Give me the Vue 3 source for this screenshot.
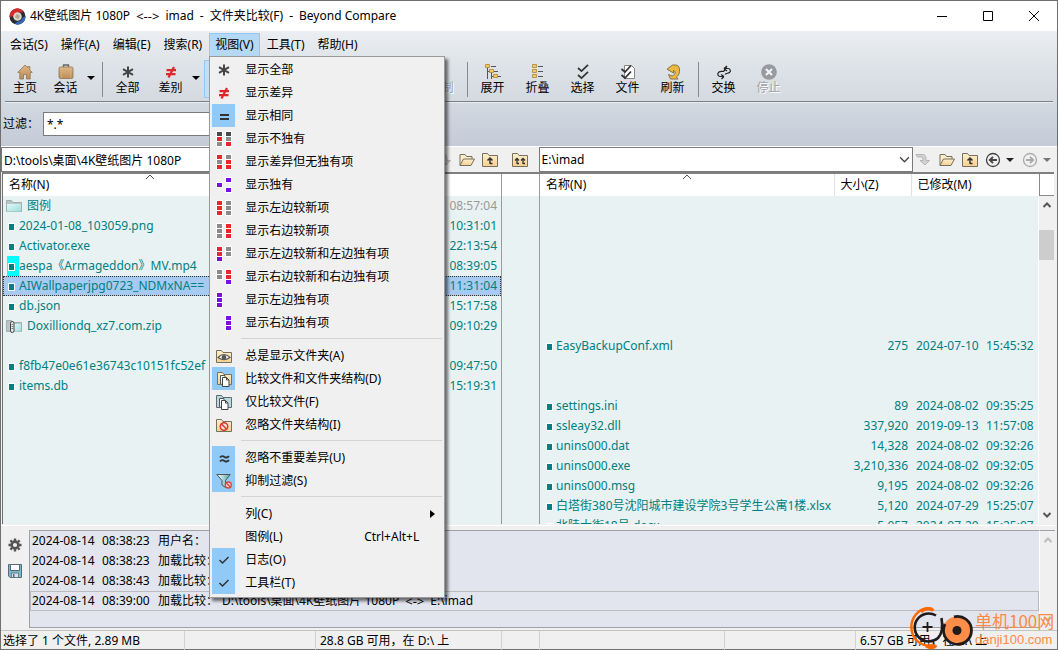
<script setup>
import { ref } from 'vue'

const menus = ['会话(S)', '操作(A)', '编辑(E)', '搜索(R)', '视图(V)', '工具(T)', '帮助(H)']
const openMenu = '视图(V)'

const cellColors = { K: '#4a4a4a', R: '#e8262b', G: '#8b8b8b', P: '#7a10e0' }

function cells(pattern) {
  return pattern
    .split('')
    .map((c, i) => ({ c, x: i % 2 ? 10 : 1, y: 1 + Math.floor(i / 2) * 5 }))
    .filter((cell) => cell.c !== '-')
    .map((cell) => ({ ...cell, fill: cellColors[cell.c] }))
}

const menuGroups = [
  [
    { text: '显示全部', icon: 'star' },
    { text: '显示差异', icon: 'noteq' },
    { text: '显示相同', icon: 'equal', on: true },
    { text: '显示不独有', cells: 'KKRGGR' },
    { text: '显示差异但无独有项', cells: 'RGGRRR' },
    { text: '显示独有', cells: '-PP--P' },
    { text: '显示左边较新项', cells: 'RGRGRG' },
    { text: '显示右边较新项', cells: 'GRGRGR' },
    { text: '显示左边较新和左边独有项', cells: 'RGRGP-' },
    { text: '显示右边较新和右边独有项', cells: 'GRGR-P' },
    { text: '显示左边独有项', cells: 'P-P-P-' },
    { text: '显示右边独有项', cells: '-P-P-P' },
  ],
  [
    { text: '总是显示文件夹(A)', icon: 'eye' },
    { text: '比较文件和文件夹结构(D)', icon: 'struct', on: true },
    { text: '仅比较文件(F)', icon: 'files' },
    { text: '忽略文件夹结构(I)', icon: 'nofolder' },
  ],
  [
    { text: '忽略不重要差异(U)', icon: 'approx', on: true },
    { text: '抑制过滤(S)', icon: 'funnel', on: true },
  ],
  [
    { text: '列(C)', sub: true },
    { text: '图例(L)', key: 'Ctrl+Alt+L' },
    { text: '日志(O)', icon: 'check', on: true },
    { text: '工具栏(T)', icon: 'check', on: true },
  ],
]

const leftRows = [
  { name: '图例', time: '08:57:04', icon: 'folderteal', dim: true },
  { name: '2024-01-08_103059.png', time: '10:31:01' },
  { name: 'Activator.exe', time: '22:13:54' },
  { name: 'aespa《Armageddon》MV.mp4', time: '08:39:05', mark: true },
  { name: 'AIWallpaperjpg0723_NDMxNA==', time: '11:31:04', selected: true },
  { name: 'db.json', time: '15:17:58' },
  { name: 'Doxilliondq_xz7.com.zip', time: '09:10:29', icon: 'zip' },
  {},
  { name: 'f8fb47e0e61e36743c10151fc52ef', time: '09:47:50' },
  { name: 'items.db', time: '15:19:31' },
]

const blank = (n) => Array.from({ length: n }, () => ({}))
const rightRows = [
  ...blank(7),
  { name: 'EasyBackupConf.xml', size: '275', day: '2024-07-10', time: '15:45:32' },
  ...blank(2),
  { name: 'settings.ini', size: '89', day: '2024-08-02', time: '09:35:25' },
  { name: 'ssleay32.dll', size: '337,920', day: '2019-09-13', time: '11:57:08' },
  { name: 'unins000.dat', size: '14,328', day: '2024-08-02', time: '09:32:26' },
  { name: 'unins000.exe', size: '3,210,336', day: '2024-08-02', time: '09:32:05' },
  { name: 'unins000.msg', size: '9,195', day: '2024-08-02', time: '09:32:26' },
  { name: '白塔街380号沈阳城市建设学院3号学生公寓1楼.xlsx', size: '5,120', day: '2024-07-29', time: '15:25:07' },
  { name: '北陵大街18号.docx', size: '5,057', day: '2024-07-29', time: '15:25:07' },
]

const logs = [
  { day: '2024-08-14', time: '08:38:23', text: '用户名：' },
  { day: '2024-08-14', time: '08:38:23', text: '加载比较：' },
  { day: '2024-08-14', time: '08:38:43', text: '加载比较：' },
  { day: '2024-08-14', time: '08:39:00', text: '加载比较：', from: 'D:\\tools\\桌面\\4K壁纸图片 1080P', to: 'E:\\imad' },
]

const status = ['选择了 1 个文件, 2.89 MB', '', '28.8 GB 可用，在 D:\\ 上', '', '', '', '6.57 GB 可用，在 E:\\ 上']

const filter = ref('*.*')
const leftPath = ref('D:\\tools\\桌面\\4K壁纸图片 1080P')
const rightPath = ref('E:\\imad')
</script>

<template>
  <svg class="defs" aria-hidden="true">
    <defs>
      <linearGradient id="gTan" x1="0" y1="0" x2="0" y2="1"><stop offset="0" stop-color="#dfb988" /><stop offset="1" stop-color="#bd8c55" /></linearGradient>
      <linearGradient id="gFold" x1="0" y1="0" x2="0" y2="1"><stop offset="0" stop-color="#fdf0cf" /><stop offset="1" stop-color="#f6cf8c" /></linearGradient>
      <linearGradient id="gTeal" x1="0" y1="0" x2="1" y2="1"><stop offset="0" stop-color="#dff8f7" /><stop offset="1" stop-color="#9fdcdd" /></linearGradient>
      <linearGradient id="gFun" x1="0" y1="0" x2="1" y2="0"><stop offset="0" stop-color="#fff" /><stop offset="1" stop-color="#4fa6a6" /></linearGradient>
    </defs>
    <symbol id="star" viewBox="0 0 16 16"><path d="M8 2.5v11M3 5.2l10 5.6M13 5.2L3 10.8" stroke="#444" stroke-width="2" fill="none" /></symbol>
    <symbol id="noteq" viewBox="0 0 16 16"><path d="M3.5 6.2h9.5M3 10.2h9.5M11 3L5.5 13.5" stroke="#e0252b" stroke-width="2.2" fill="none" /></symbol>
    <symbol id="equal" viewBox="0 0 16 16"><path d="M4 7h9M4 11h9" stroke="#333" stroke-width="2" /></symbol>
    <symbol id="approx" viewBox="0 0 16 16"><path d="M4 7.5c1.5-2 3-1.6 4.5-.6s3 1 4.5-.8M4 11.5c1.5-2 3-1.6 4.5-.6s3 1 4.5-.8" stroke="#333" stroke-width="1.8" fill="none" /></symbol>
    <symbol id="check" viewBox="0 0 16 16"><path d="M3.5 8l3 3 6-6" stroke="#333" stroke-width="1.5" fill="none" /></symbol>
    <symbol id="home" viewBox="0 0 16 16"><path d="M8 1L.8 8.4h2V15h3.7v-4.5h3V15h3.7V8.400h2L12.800 5.900V2.500h-2V4z" fill="url(#gTan)" stroke="#8f7350" stroke-width=".8" /></symbol>
    <symbol id="case" viewBox="0 0 16 16"><path d="M5.500 3V1h5v2" stroke="#666" stroke-width="1.300" fill="none" /><rect x="1" y="3" width="14" height="11.500" rx="1.500" fill="url(#gTan)" stroke="#8f7350" stroke-width=".8" /><path d="M3.500 3v11M12.500 3v11" stroke="#d9b27e" stroke-width=".6" /></symbol>
    <symbol id="expand" viewBox="0 0 16 16"><path d="M2.500 4v11M6.500 7v8M6 2.500h5M9 7.500h4M12 12.500h4M2.500 7.500h3M6.500 12.500h3" stroke="#555" fill="none" /><path d="M.5.500h4v3h-4zM4.500 5.500h4v3h-4zM8.500 10.500h4v3h-4z" fill="#f4c860" stroke="#b08432" stroke-width=".8" /></symbol>
    <symbol id="collapse" viewBox="0 0 16 16"><path d="M8 2.500h5M8 7.500h5M8 12.500h5" stroke="#555" fill="none" /><path d="M2.500.500h4v3h-4zM2.500 5.500h4v3h-4zM2.500 10.500h4v3h-4z" fill="#f4c860" stroke="#b08432" stroke-width=".8" /></symbol>
    <symbol id="select" viewBox="0 0 16 16"><path d="M3 4l3.500 3.200L13 .8M3 11l3.500 3.200L13 7.800" stroke="#333" stroke-width="1.700" fill="none" /></symbol>
    <symbol id="filesel" viewBox="0 0 16 16"><path d="M4.500 1.500h7l3 3v10h-10z" fill="#fff" stroke="#888" /><path d="M1.500 5L5 8l6-6.500M1.500 11L5 14l6-6.500" stroke="#333" stroke-width="1.700" fill="none" /></symbol>
    <symbol id="refresh" viewBox="0 0 16 16"><path d="M7.500 1H11c3 .5 3.800 3 3.500 6.500-.3 3-1.500 4.500-3 5.300L13 15H5.500l-2-4.500L7 12c2.500-.8 3.500-2.500 3-4.500L8.500 6.500V9L2 5.200 7.500 1z" fill="#edb83f" stroke="#7c6a45" stroke-width=".9" /></symbol>
    <symbol id="swap" viewBox="0 0 16 16"><path d="M8 12.500L5.500 15M8 12.500L5 10.500M8 12.500H4C1.500 12 1 9.500 3 8s4 0 5-1 1-3 3-4.500M8 4.500h4c2.500 0 3 3 1.500 4s-3.500.5-4.500 2M8 4.500l3-2.500M8 4.500l3 2.500" stroke="#222" stroke-width="1.200" fill="none" /></symbol>
    <symbol id="stop" viewBox="0 0 16 16"><circle cx="8" cy="8" r="7.800" fill="#989a9e" /><path d="M5 5l6 6M11 5l-6 6" stroke="#f0f1f3" stroke-width="2.200" /></symbol>
    <symbol id="copy" viewBox="0 0 16 16"><path d="M1 6h5V3l5 5-5 5v-3H1z" fill="#999" /></symbol>
    <symbol id="open" viewBox="0 0 16 16"><path d="M1 13.500v-11h5l1.500 2h5.500v2.500" fill="#fdecc6" stroke="#77705f" /><path d="M1 13.500L4.500 7h11L12 13.500z" fill="url(#gFold)" stroke="#77705f" /></symbol>
    <symbol id="up" viewBox="0 0 16 16"><path d="M.5 14.500v-13h5l1.500 2h8.500v11z" fill="url(#gFold)" stroke="#77705f" /><path d="M8 12V7M5.500 8.500L8 6l2.500 2.500M8 11.500h2.500" stroke="#333" stroke-width="1.500" fill="none" /></symbol>
    <symbol id="up2" viewBox="0 0 16 16"><path d="M.5 14.500v-13h5l1.500 2h8.500v11z" fill="url(#gFold)" stroke="#77705f" /><path d="M5 12V7M3 8.500L5 6.500l2 2M5 11.500h2M11 12V7M9 8.500l2-2 2 2M11 11.500h2" stroke="#333" stroke-width="1.300" fill="none" /></symbol>
    <symbol id="browse" viewBox="0 0 16 16"><path d="M1 2.500h6.500c3 0 3.500 2 3.500 6h3.500L10 13 5 8.500h3c0-3-.5-3.500-2.500-3.500H2.500z" fill="#d2d2d2" stroke="#aaa" stroke-width=".8" /></symbol>
    <symbol id="back" viewBox="0 0 16 16"><circle cx="8" cy="8" r="6.500" fill="none" stroke="currentColor" stroke-width="1.300" /><path d="M12 8H5M8 4.800L4.800 8 8 11.200" fill="none" stroke="currentColor" stroke-width="1.900" /></symbol>
    <symbol id="fwd" viewBox="0 0 16 16"><circle cx="8" cy="8" r="6.500" fill="none" stroke="currentColor" stroke-width="1.300" /><path d="M4 8h7M8 4.800l3.200 3.200L8 11.200" fill="none" stroke="currentColor" stroke-width="1.900" /></symbol>
    <symbol id="eye" viewBox="0 0 16 16"><path d="M.5 14.500v-12h5l1.500 2h8.500v10z" fill="url(#gFold)" stroke="#77705f" /><path d="M2 9.500Q8 3.500 14 9.500 8 14 2 9.500z" fill="#fff" stroke="#555" stroke-width="1.100" /><circle cx="8" cy="9.300" r="2.300" fill="#555" /></symbol>
    <symbol id="struct" viewBox="0 0 16 16"><path d="M1.500 13.500v-12h5l1.500 2h7.500v10z" fill="url(#gFold)" stroke="#77705f" /><path d="M4.500 13V4.500h4.500v2" fill="#fff" stroke="#555" /><path d="M6.500 6.500h4l2.500 2.500v6.500H6.500z" fill="#fff" stroke="#444" /><path d="M10.500 6.500V9H13" fill="none" stroke="#444" /></symbol>
    <symbol id="files" viewBox="0 0 16 16"><path d="M.5 13.500v-12h5l1.500 2h8.500v10z" fill="#b4dedc" stroke="#667" /><path d="M3.500 13V4.500H8v1.500" fill="#fff" stroke="#555" /><path d="M5.500 6.500h4l2.500 2.500v6.500H5.500z" fill="#fff" stroke="#444" /><path d="M9.500 6.500V9H12" fill="none" stroke="#444" /></symbol>
    <symbol id="nofolder" viewBox="0 0 16 16"><path d="M.5 14.500v-12h5l1.500 2h8.500v10z" fill="url(#gFold)" stroke="#77705f" /><circle cx="8" cy="9.500" r="3.700" fill="#fbe3dc" stroke="#d8372c" stroke-width="1.500" /><path d="M5.500 7l5 5" stroke="#d8372c" stroke-width="1.500" /></symbol>
    <symbol id="funnel" viewBox="0 0 16 16"><path d="M.8 1.500h13.400L9.500 7.500v7l-3.500-2.500V7.500z" fill="url(#gFun)" stroke="#555" /><circle cx="12.300" cy="12" r="3" fill="#f6d9d6" stroke="#d4473f" stroke-width="1.300" /><path d="M10.300 10l4 4" stroke="#d4473f" stroke-width="1.300" /></symbol>
    <symbol id="folderteal" viewBox="0 0 16 16"><path d="M.5 13.500v-11h5l1.500 2h8.500v9z" fill="#b9c5c6" stroke="#a2adae" /><path d="M1 6h14v7.500H1z" fill="url(#gTeal)" /></symbol>
    <symbol id="zip" viewBox="0 0 16 16"><path d="M.5 13.500v-11h5l1.500 2h8.500v9z" fill="#b9c5c6" stroke="#a2adae" /><path d="M8 6h7v7.500H8z" fill="url(#gTeal)" /><rect x="4.500" y="3.500" width="3.500" height="11" rx="1.700" fill="#e8e8e8" stroke="#444" /><path d="M6.200 6v6" stroke="#444" stroke-dasharray="1 1" /></symbol>
    <symbol id="gear" viewBox="0 0 16 16"><circle cx="8" cy="8" r="3.400" fill="none" stroke="#555" stroke-width="2.600" /><path d="M8 1.500v2.500M8 12v2.500M1.500 8h2.500M12 8h2.500M3.400 3.400L5 5M11 11l1.600 1.600M12.600 3.400L11 5M5 11l-1.600 1.600" stroke="#555" stroke-width="2.400" /></symbol>
    <symbol id="save" viewBox="0 0 16 16"><path d="M1.500 1.500h13v13H3l-1.500-1.500z" fill="#76b9d0" stroke="#596b75" /><path d="M3.500 1.500h9v6h-9z" fill="#fff" stroke="#596b75" /><path d="M4.500 10h7v4.500h-7z" fill="#dde4e8" stroke="#596b75" stroke-width=".8" /><path d="M6 11h1.500v3H6z" fill="#596b75" /></symbol>
    <symbol id="down" viewBox="0 0 8 8"><path d="M0 2h8L4 6z" fill="currentColor" /></symbol>
    <symbol id="chevup" viewBox="0 0 10 10"><path d="M1.500 7L5 3.500 8.500 7" fill="none" stroke="currentColor" stroke-width="2" /></symbol>
    <symbol id="chevdown" viewBox="0 0 10 10"><path d="M1.500 3L5 6.500 8.500 3" fill="none" stroke="currentColor" stroke-width="2" /></symbol>
    <symbol id="thinup" viewBox="0 0 10 10"><path d="M1 7l4-4 4 4" fill="none" stroke="#555" /></symbol>
    <symbol id="thindown" viewBox="0 0 10 10"><path d="M1 3l4 4 4-4" fill="none" stroke="#444" stroke-width="1.200" /></symbol>
  </svg>

  <div class="window">
    <header class="title">
      <svg class="logo" viewBox="0 0 16 16">
        <circle cx="8" cy="8" r="7.500" fill="#2b2b2e" />
        <path d="M.5 8.500C.2 3.500 4 .2 8.500.3l3.500 1.500 1 2.700-3-.5-3 1L3.500 8z" fill="#d92a2a" />
        <path d="M15.500 7.500c.3 5-3.500 8.300-8 8.200l-2-1.200L8 13l3-1 2-3z" fill="#3767b5" />
        <circle cx="8" cy="8" r="4" fill="#d8d6d0" /><path d="M5.500 8.500l2-3 3 2-2 3z" fill="#b5a68d" />
      </svg>
      <h1>
        <span>4K壁纸图片 1080P</span><span class="arrows">&lt;--&gt;</span><span>imad</span><span>-</span><span>文件夹比较(F)</span><span>-</span><span>Beyond Compare</span>
      </h1>
      <button aria-label="最小化"><svg viewBox="0 0 10 10"><path d="M0 5.500h10" /></svg></button>
      <button aria-label="最大化"><svg viewBox="0 0 10 10"><path d="M.5.500h9v9h-9z" /></svg></button>
      <button aria-label="关闭"><svg viewBox="0 0 10 10"><path d="M0 0l10 10M10 0L0 10" /></svg></button>
    </header>

    <div class="chrome">
      <nav class="menubar">
        <div v-for="m in menus" :key="m" class="menuslot">
          <button class="menubtn" :class="{ open: m === openMenu }">{{ m }}</button>
          <div v-if="m === openMenu" class="dropdown">
            <div v-for="(g, gi) in menuGroups" :key="gi" class="group">
              <button v-for="it in g" :key="it.text" class="item">
                <span class="ico" :class="{ on: it.on }">
                  <svg v-if="it.cells" class="i16" viewBox="0 0 16 16">
                    <rect v-for="(c, ci) in cells(it.cells)" :key="'w' + ci" :x="c.x - 1" :y="c.y - 1" width="7" height="6" fill="#fff" />
                    <rect v-for="(c, ci) in cells(it.cells)" :key="ci" :x="c.x" :y="c.y" width="5" height="4" :fill="c.fill" />
                  </svg>
                  <svg v-else-if="it.icon" class="i16"><use :href="'#' + it.icon" /></svg>
                </span>
                <span class="label">{{ it.text }}</span>
                <span v-if="it.key" class="key">{{ it.key }}</span>
                <svg v-if="it.sub" class="sub" viewBox="0 0 5 8"><path d="M0 0l5 4-5 4z" /></svg>
              </button>
            </div>
          </div>
        </div>
      </nav>

      <div class="toolbar">
        <button class="tool home"><svg><use href="#home" /></svg>主页</button>
        <button class="tool split"><svg><use href="#case" /></svg>会话</button>
        <button class="arrow" aria-label="会话选项"><svg><use href="#down" /></svg></button>
        <i class="sep"></i>
        <button class="tool"><svg><use href="#star" /></svg>全部</button>
        <button class="tool split"><svg><use href="#noteq" /></svg>差别</button>
        <button class="arrow" aria-label="差别选项"><svg><use href="#down" /></svg></button>
        <button class="tool pressed"><svg><use href="#equal" /></svg>相同</button>
        <span class="covered"></span>
        <button class="tool" disabled><svg><use href="#copy" /></svg>复制</button>
        <i class="sep"></i>
        <button class="tool"><svg><use href="#expand" /></svg>展开</button>
        <button class="tool"><svg><use href="#collapse" /></svg>折叠</button>
        <button class="tool"><svg><use href="#select" /></svg>选择</button>
        <button class="tool"><svg><use href="#filesel" /></svg>文件</button>
        <button class="tool"><svg><use href="#refresh" /></svg>刷新</button>
        <i class="sep"></i>
        <button class="tool"><svg><use href="#swap" /></svg>交换</button>
        <button class="tool" disabled><svg><use href="#stop" /></svg>停止</button>
      </div>

      <div class="filter">
        <label for="filter">过滤：</label>
        <input id="filter" v-model="filter" type="text" />
      </div>
    </div>

    <div class="paths">
      <div class="pathside left">
        <input v-model="leftPath" class="combo" type="text" aria-label="左侧路径" />
        <button class="pi" aria-label="浏览" disabled><svg><use href="#browse" /></svg></button>
        <button class="pi" aria-label="打开文件夹"><svg><use href="#open" /></svg></button>
        <button class="pi" aria-label="上一级"><svg><use href="#up" /></svg></button>
      </div>
      <div class="pathmid"><button class="pi" aria-label="双侧上一级"><svg><use href="#up2" /></svg></button></div>
      <div class="pathside right">
        <div class="selectwrap">
          <select v-model="rightPath" class="combo" aria-label="右侧路径"><option>E:\imad</option></select>
          <svg class="chev"><use href="#thindown" /></svg>
        </div>
        <button class="pi first" aria-label="浏览" disabled><svg><use href="#browse" /></svg></button>
        <button class="pi" aria-label="打开文件夹"><svg><use href="#open" /></svg></button>
        <button class="pi" aria-label="上一级"><svg><use href="#up" /></svg></button>
        <button class="pi hist" aria-label="后退"><svg><use href="#back" /></svg></button>
        <button class="pa" aria-label="后退历史"><svg><use href="#down" /></svg></button>
        <button class="pi hist" aria-label="前进" disabled><svg><use href="#fwd" /></svg></button>
        <button class="pa" aria-label="前进历史" disabled><svg><use href="#down" /></svg></button>
      </div>
    </div>

    <main class="compare">
      <div class="pane left">
        <table>
          <thead>
            <tr><th>名称(N)<svg class="sort"><use href="#thinup" /></svg></th><th class="date"></th></tr>
          </thead>
          <tbody>
            <tr v-for="(r, i) in leftRows" :key="i" :class="{ selected: r.selected }">
              <td :class="{ mark: r.mark }">
                <template v-if="r.name">
                  <svg v-if="r.icon" class="ficon"><use :href="'#' + r.icon" /></svg>
                  <i v-else class="dot"></i>{{ r.name }}
                </template>
              </td>
              <td class="date" :class="{ dim: r.dim }">{{ r.time }}</td>
            </tr>
          </tbody>
        </table>
      </div>
      <div class="gutter"></div>
      <div class="pane">
        <table>
          <thead>
            <tr><th>名称(N)<svg class="sort"><use href="#thinup" /></svg></th><th class="size">大小(Z)</th><th class="date">已修改(M)</th></tr>
          </thead>
          <tbody>
            <tr v-for="(r, i) in rightRows" :key="i">
              <td><template v-if="r.name"><i class="dot"></i>{{ r.name }}</template></td>
              <td class="size">{{ r.size }}</td>
              <td class="date"><span class="day">{{ r.day }}</span>{{ r.time }}</td>
            </tr>
          </tbody>
        </table>
      </div>
      <div class="scroll main">
        <div class="corner"></div>
        <svg><use href="#chevup" /></svg>
        <div class="thumb"></div>
        <svg class="end"><use href="#chevdown" /></svg>
      </div>
    </main>

    <section class="log">
      <div class="logtools">
        <button aria-label="设置"><svg><use href="#gear" /></svg></button>
        <button aria-label="保存"><svg><use href="#save" /></svg></button>
      </div>
      <div class="logbody">
        <p v-for="(l, i) in logs" :key="i" :class="{ current: i === logs.length - 1 }">
          <span class="day">{{ l.day }}</span><span class="at">{{ l.time }}</span><span class="what">{{ l.text }}</span>
          <span v-if="l.from" class="route"><span>{{ l.from }}</span><span class="arrows">&lt;-&gt;</span><span>{{ l.to }}</span></span>
        </p>
      </div>
      <div class="scroll off">
        <svg><use href="#chevup" /></svg>
        <svg class="end"><use href="#chevdown" /></svg>
      </div>
    </section>

    <footer class="status"><span v-for="(s, i) in status" :key="i">{{ s }}</span></footer>

    <div class="watermark">
      <svg viewBox="0 0 64 42">
        <path d="M22 2.500C10-1 0 12 3 25c2 9 12 16 21 13" fill="none" stroke="#ff6a00" stroke-width="2.500" />
        <path d="M12 5c4-5 11-4 12-1M17 39c4 2 8 2 10-1" fill="none" stroke="#ff6a00" stroke-width="3.500" />
        <path d="M27 8.500A14 14 0 1 0 29 31c4-4 5-11 3.500-20" fill="none" stroke="#201a1a" stroke-width="2.600" />
        <path d="M18.500 15v10M13.500 20h10" stroke="#201a1a" stroke-width="1.800" />
        <circle cx="48" cy="23.500" r="14" fill="#ff8d4a" />
        <path d="M45 9.800A14 14 0 1 1 36 17" fill="none" stroke="#201a1a" stroke-width="2.800" />
        <circle cx="48" cy="23.500" r="4.500" fill="#201a1a" />
      </svg>
      <div class="wmtext"><b>单机100网</b><span>danji100.com</span></div>
    </div>
  </div>
</template>

<style>
body { background: #f0f0f0; }
html, body, #app { height: 100%; overflow: hidden; }
</style>

<style scoped>
.defs { position: absolute; width: 0; height: 0; }
.window {
  position: relative; box-sizing: border-box; height: 100vh; display: flex; flex-direction: column;
  border: 1px solid #6f6f6f; background: #f0f0f0; color: #000;
  font: 12px/20px "Noto Sans", "Noto Sans CJK SC", sans-serif;
}
button, input, select { font: inherit; color: inherit; margin: 0; padding: 0; border: 0; background: none; border-radius: 0; outline: 0; }
svg { display: block; flex: none; }
p, h1 { margin: 0; font: inherit; }

.title { display: flex; align-items: center; height: 30px; flex: none; background: #fff; padding-left: 8px; }
.logo { width: 17px; height: 17px; }
.title h1 { flex: 1; display: flex; gap: 6px; margin-left: 4px; white-space: nowrap; }
.arrows { font-size: 13px; }
.title button { width: 46px; height: 30px; display: grid; place-items: center; }
.title button svg { width: 10px; height: 10px; fill: none; stroke: #000; }

.chrome { flex: none; background: linear-gradient(#ebeef3, #e0e5e9 24%, #d2d8e0 65%, #c4cad7); height: 115px; }
.menubar { display: flex; gap: 1px; padding: 2px 0 0 3px; height: 27px; box-sizing: border-box; }
.menuslot { position: relative; }
.menubtn { height: 24px; padding: 0 6px; white-space: nowrap; }
.menubtn.open { background: #b5d8f5; box-shadow: inset 0 0 0 1px #90c8f6; }

.dropdown {
  position: absolute; z-index: 5; top: 23px; left: 0; width: 232px; padding: 1px 1px 3px;
  background: #f0f0f0; border: 1px solid #9a9a9a; box-shadow: 3px 3px 3px rgba(0, 0, 0, .55);
}
.group + .group::before { content: ""; display: block; height: 1px; margin: 4px 1px 5px 30px; background: #d4d4d4; }
.item { display: flex; align-items: center; width: 100%; height: 23px; text-align: left; }
.ico { width: 23px; height: 23px; margin-left: 1px; display: grid; place-items: center; }
.ico.on { background: #91c9f7; }
.i16 { width: 16px; height: 16px; }
.label { margin-left: 10px; flex: 1; white-space: nowrap; }
.key { margin-right: 24px; }
.sub { width: 5px; height: 8px; margin-right: 8px; }

.toolbar { display: flex; height: 43px; margin: 0 4px; border-bottom: 1px solid #7b8086; box-shadow: 0 1px #e8ecf0; }
.tool { width: 45px; height: 38px; margin-top: 2px; padding-top: 4px; display: flex; flex-direction: column; align-items: center; line-height: 16px; flex: none; }
.tool svg { width: 16px; height: 16px; }
.tool.home { width: 40px; }
.tool.split { width: 41px; }
.tool:disabled { color: #9fa3a8; text-shadow: 1px 1px #fff; }
.tool.pressed { margin-left: 4px; background: #c4def5; box-shadow: inset 0 0 0 1px #90c8f6; }
.arrow { width: 9px; display: grid; place-items: center; padding-bottom: 4px; }
.arrow svg { width: 8px; height: 8px; }
.sep { width: 1px; height: 35px; margin: 4px 2px 0 3px; background: #858a90; flex: none; }
.arrow + .sep { margin-left: 7px; margin-right: 2px; }
.covered { width: 170px; flex: none; }

.filter { display: flex; align-items: center; height: 44px; padding-left: 2px; }
.filter label { width: 40px; white-space: nowrap; }
.filter input { width: 300px; height: 24px; box-sizing: border-box; border: 1px solid #7a7a7a; background: #fff; padding: 0 3px; }

.paths { display: flex; height: 25px; flex: none; border-top: 1px solid #fff; }
.pathside { flex: 1 1 0; display: flex; align-items: center; min-width: 0; }
.pathside.right { flex-basis: 18px; }
.pathmid { width: 37px; display: flex; align-items: center; justify-content: center; }
.combo { flex: 1; min-width: 0; height: 25px; box-sizing: border-box; border: 1px solid #7a7a7a; background: #fff; padding: 0 2px; }
.pi { width: 16px; color: #444; flex: none; }
.pi svg { width: 16px; height: 16px; }
.left .pi { margin: 0 4px 0 3px; }
.right .pi { margin-right: 7px; }
.right .pi.first { margin: 0 8px 0 2px; }
.right .pi.hist { margin-right: 5px; }
.pi:disabled { color: #aaa; }
.pa { width: 8px; margin-right: 8px; color: #222; flex: none; }
.pa:last-child { margin-right: 6px; }
.pa:disabled { color: #777; }
.pa svg { width: 8px; height: 8px; }
.selectwrap { flex: 1; position: relative; display: flex; min-width: 0; }
.selectwrap select { appearance: none; width: 100%; }
.chev { position: absolute; right: 3px; top: 7px; width: 11px; height: 11px; pointer-events: none; }

.compare { flex: 1; min-height: 0; display: flex; margin: 0 3px 0 1px; border-top: 2px solid #7f7f7f; border-left: 1px solid #6f6f6f; overflow: hidden; background: #e9f2f3; }
.pane { flex: 1; min-width: 0; overflow: hidden; }
.gutter { width: 39px; flex: none; box-sizing: border-box; border: solid #9b9b9b; border-width: 0 1px; background: linear-gradient(#fff 22px, #e9f2f3 22px); }
table { border-collapse: collapse; table-layout: fixed; width: 100%; color: #008080; }
th { position: relative; height: 22px; padding: 0 6px; background: #fff; color: #000; text-align: left; font-weight: normal; line-height: 20px; border-right: 1px solid #e2e2e2; box-sizing: border-box; }
th:last-child { border-right: 0; }
.sort { position: absolute; left: 50%; top: -2px; width: 10px; height: 10px; margin-left: -5px; }
.left .sort { margin-left: -49px; }
td { height: 20px; padding: 0 0 0 6px; line-height: 20px; white-space: nowrap; overflow: hidden; box-sizing: border-box; }
.size { width: 77px; }
td.size { text-align: right; padding: 0 3px 0 0; }
.date { width: 127px; }
td.date { padding: 0 0 0 5px; }
.day { display: inline-block; width: 70px; }
.left .date { width: 115px; }
.left td.date { text-align: right; padding-right: 4px; }
.left td { padding-left: 3px; }
.dim { color: #999; }
.selected { background: #a6caf0; outline: 1px dotted #333; outline-offset: -1px; }
.mark { background: linear-gradient(90deg, transparent 4px, #0ff 4px, #0ff 16px, transparent 16px); }
.dot { display: inline-block; width: 5px; height: 6px; margin: 0 4px 0 2px; background: #008080; border: 1px solid #fff; vertical-align: -1px; }
.pane:not(.left) .dot { margin-left: 0; margin-right: 3px; }
.ficon { display: inline-block; width: 16px; height: 16px; margin-right: 5px; vertical-align: -4px; }

.scroll { width: 16px; flex: none; background: #f0f0f0; display: flex; flex-direction: column; align-items: center; border-left: 1px solid #fff; box-sizing: border-box; color: #555; }
.scroll svg { width: 10px; height: 10px; margin: 4px 0; }
.scroll .end { margin-top: auto; }
.scroll.off { color: #bcbcbc; }
.corner { width: 100%; height: 22px; background: #fff; border-left: 1px solid #8a8a8a; border-bottom: 1px solid #8a8a8a; box-sizing: border-box; }
.thumb { width: 15px; height: 30px; margin-top: 16px; background: #cdcdcd; }

.log { flex: none; display: flex; height: 98px; margin: 6px 2px 0 0; position: relative; }
.log::before { content: ""; position: absolute; left: 0; right: 0; top: -5px; height: 1px; background: #fff; }
.logtools { width: 28px; flex: none; display: flex; flex-direction: column; align-items: center; padding-top: 7px; gap: 10px; }
.logtools svg { width: 16px; height: 16px; }
.logbody { flex: 1; min-width: 0; background: #e2e5ee; border: 1px solid #a0a0a8; border-right: 0; overflow: hidden; box-sizing: border-box; }
.logbody p { display: flex; height: 20px; padding-left: 1px; border: 1px solid transparent; box-sizing: border-box; line-height: 18px; white-space: nowrap; }
.logbody .current { border-color: #bcbcc0; }
.at { width: 56px; }
.what { width: 64px; }
.route { display: flex; gap: 6px; }
.log .scroll { border-top: 1px solid #a0a0a8; }

.status { flex: none; display: grid; grid-template-columns: 183fr 131fr 186fr 38fr 185fr 131fr 202fr; height: 18px; margin-top: 2px; border-top: 1px solid #c4c4c4; line-height: 20px; }
.status span { padding-left: 4px; white-space: nowrap; border-left: 1px solid #d2d2d2; }
.status span:first-child { padding-left: 2px; border-left: 0; }

.watermark { position: absolute; z-index: 6; right: 0; bottom: 0; display: flex; align-items: flex-end; }
.watermark svg { width: 64px; height: 42px; }
.wmtext { display: flex; flex-direction: column; width: 82px; margin-left: 2px; color: #ff8a45; font-family: "Liberation Sans", "Noto Sans CJK SC", sans-serif; white-space: nowrap; }
.wmtext b { font: 17px/20px "Noto Sans CJK SC", sans-serif; }
.wmtext span { font-size: 13px; line-height: 18px; }
</style>
